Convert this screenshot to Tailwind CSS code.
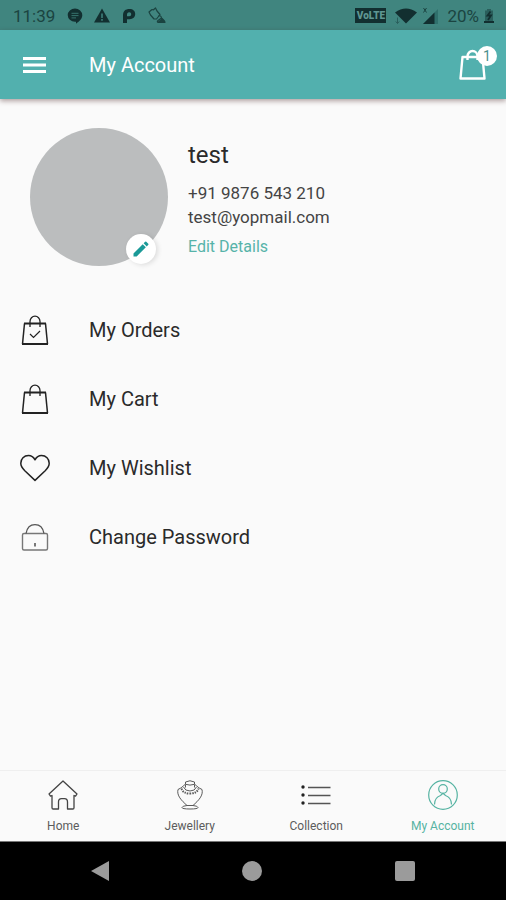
<!DOCTYPE html>
<html lang="en">
<head>
<meta charset="utf-8">
<meta name="viewport" content="width=device-width, initial-scale=1">
<title>My Account</title>
<script src="https://cdn.jsdelivr.net/npm/@tailwindcss/browser@4"></script>
</head>
<body class="flex min-h-screen flex-col bg-[#fafafa] font-['Roboto',sans-serif] text-[#2a2a2a]">

<!-- Status bar -->
<div class="flex h-[30px] items-center justify-between bg-[#40857f] pt-px pr-3 pl-[13px] text-[#1b4441]">
  <div class="flex items-center gap-3">
    <span class="text-[17px] leading-6">11:39</span>
    <div class="flex items-center gap-[11px]">
      <svg class="size-4" viewBox="0 0 16 16" fill="#122f30" aria-hidden="true"><path d="M8 0.500a7.300 6.800 0 0 1 7.300 6.700c0 3.600-3.200 6.200-6.300 8.500v-2H8A7.300 6.600 0 0 1 8 .5z"/><path d="M4.500 5.300h7M4.500 7.600h7M4.500 9.900h4.500" stroke="#40857f" stroke-width=".8"/></svg>
      <svg class="size-4" viewBox="0 0 16 16" fill="#122f30" aria-hidden="true"><path d="M8 .5l8 14H0z"/><path d="M8 5.500v4.500M8 11v1.800" stroke="#40857f" stroke-width="1.500"/></svg>
      <svg class="size-4" viewBox="0 0 16 16" fill="#122f30" fill-rule="evenodd" aria-hidden="true"><path d="M2 15V7.500C2 3 4.500 1 8.500 1c3.500 0 5.700 2 5.700 5s-2.200 5.200-5.500 5.200H6V15zM6 8.300h2.200c1.300 0 2-.8 2-2s-.7-2-2-2C6.700 4.300 6 5.200 6 6.800z"/></svg>
      <svg class="size-[18px]" viewBox="0 0 18 18" fill="none" stroke="#1b4441" stroke-width="1.200" stroke-linejoin="round" aria-hidden="true"><path d="M1 5l3-2.500 1.500.3L7.500 1l1.500 3 3 3.500-3.500 4.500H6L2.500 8z"/><path d="M10.500 9q2.500-1 3 2l-3.500 2.500q-1.500 1.500.5 2h5.500q1.500-.5 0-2l-2.500-2.500"/><path d="M10.500 15l3.500-3 3 3.300z" fill="#1b4441"/></svg>
    </div>
  </div>
  <div class="flex items-center gap-[9px]">
    <span class="flex h-[15px] w-[31px] items-center justify-center bg-[#122f30] text-[10px] leading-none font-black text-[#5f9692]">VoLTE</span>
    <div class="flex items-center gap-[5px]">
      <svg class="h-4 w-[22px]" viewBox="0 0 22 16" fill="#122f30" aria-hidden="true"><path d="M0 4.500Q11-3.500 22 4.500L11 15.500z"/><path d="M2.500 9.500v6M.8 13.500l1.700 2 1.700-2" stroke="#2a5f5c" fill="none"/></svg>
      <svg class="size-4" viewBox="0 0 16 16" aria-hidden="true"><path d="M16 1v15H1z" fill="#2f706c"/><path d="M12.500 4.500V16H1z" fill="#122f30"/><path d="M1.500 0l3 4.500M4.500 0l-3 4.500" stroke="#1b4441"/></svg>
    </div>
    <div class="flex items-center gap-[5px]">
      <span class="text-[17px] leading-6">20%</span>
      <svg class="h-4 w-[10px]" viewBox="0 0 10 16" aria-hidden="true"><path d="M3 1h4v1.500h2V15H1V2.500h2z" fill="#2a5f5c"/><path d="M0 13h10v2H0z" fill="#122f30"/><path d="M6.500 3.500L3.500 7.500h3.500L4 12" fill="none" stroke="#122f30" stroke-width="1.800"/></svg>
    </div>
  </div>
</div>

<!-- App bar -->
<header class="z-10 flex h-[69px] items-center bg-[#52b0ae] pr-[9px] pl-[23px] text-white shadow-[0_2px_5px_rgba(60,20,20,0.4)]">
  <button type="button" aria-label="Open menu" class="w-[66px]">
    <svg class="h-4 w-[23px]" viewBox="0 0 23 16" fill="currentColor" aria-hidden="true"><path d="M0 0h23v3H0zM0 6.500h23v3H0zM0 13h23v3H0z"/></svg>
  </button>
  <h1 class="flex-1 text-xl leading-6">My Account</h1>
  <button type="button" aria-label="Cart, 1 item" class="relative h-9 w-[38px]">
    <svg class="h-8 w-7" viewBox="0 0 28 32" fill="none" stroke="currentColor" stroke-width="2.400" stroke-linejoin="round" aria-hidden="true"><path d="M3.500 8h20l2 21.500H1.500z"/><path d="M8.500 11V7.500a5 5.500 0 0 1 10 0V11"/></svg>
    <span class="absolute -top-px right-0 flex size-5 items-center justify-center rounded-full bg-white text-sm leading-none text-[#4a8f8d]">1</span>
  </button>
</header>

<main class="flex-1">
  <!-- Profile -->
  <section class="flex gap-5 px-[30px] pt-[29px]">
    <div class="relative size-[138px] shrink-0 rounded-full bg-[#bbbdbe]">
      <button type="button" aria-label="Change photo" class="absolute right-3 bottom-[2px] flex size-[30px] items-center justify-center rounded-full bg-white shadow-[2px_1px_5px_rgba(0,0,0,0.12)]">
        <svg class="size-5" viewBox="0 0 24 24" fill="#1a9a98" aria-hidden="true"><path d="M3 17.250V21h3.750L17.810 9.940l-3.750-3.750L3 17.250zM20.710 7.040a1 1 0 0 0 0-1.410l-2.340-2.340a1 1 0 0 0-1.410 0l-1.830 1.830 3.750 3.750 1.830-1.830z"/></svg>
      </button>
    </div>
    <div class="flex flex-col items-start pt-3">
      <h2 class="text-2xl leading-[30px]">test</h2>
      <p class="mt-[11px] text-[17px] leading-6 text-[#444444]">+91 9876 543 210</p>
      <p class="text-[17px] leading-6 text-[#444444]">test@yopmail.com</p>
      <a href="#" class="mt-[6px] text-base leading-6 text-[#56b3a9]">Edit Details</a>
    </div>
  </section>

  <!-- Account links -->
  <nav aria-label="Account" class="mt-[29px] flex flex-col text-xl leading-6">
    <a href="#" class="flex h-[69px] items-center gap-[39px] px-5">
      <svg class="size-[30px]" viewBox="0 0 30 30" fill="none" stroke="#222222" aria-hidden="true"><path d="M4.500 8.500L2.500 29" stroke-width="1.500"/><path d="M25.500 8.500l2 20.500" stroke-width="1.500"/><path d="M4 8.500h22M2 29h26" stroke-width="1.800"/><path d="M10 12V6.500a5 5.300 0 0 1 10 0V12" stroke-width="1.300"/><path d="M10 19l3.500 3.500 6.500-6.500" stroke-width="1.200"/></svg>
      <span>My Orders</span>
    </a>
    <a href="#" class="flex h-[69px] items-center gap-[39px] px-5">
      <svg class="size-[30px]" viewBox="0 0 30 30" fill="none" stroke="#222222" aria-hidden="true"><path d="M4.500 8.500L2.500 29" stroke-width="1.500"/><path d="M25.500 8.500l2 20.500" stroke-width="1.500"/><path d="M4 8.500h22M2 29h26" stroke-width="1.800"/><path d="M10 12V6.500a5 5.300 0 0 1 10 0V12" stroke-width="1.300"/></svg>
      <span>My Cart</span>
    </a>
    <a href="#" class="flex h-[69px] items-center gap-[39px] px-5">
      <svg class="size-[30px]" viewBox="0 0 30 30" fill="none" stroke="#222222" stroke-width="1.500" stroke-linejoin="round" aria-hidden="true"><path d="M15 6.800C13.300 3.700 11 2.600 8.500 2.600 4 2.600.8 6 .8 10.300c0 3 1.700 5.200 4 7.500L15 27.400l10.200-9.600c2.300-2.300 4-4.500 4-7.500 0-4.300-3.200-7.700-7.700-7.700-2.500 0-4.800 1.100-6.500 4.200z"/></svg>
      <span>My Wishlist</span>
    </a>
    <a href="#" class="flex h-[69px] items-center gap-[39px] px-5">
      <svg class="size-[30px]" viewBox="0 0 30 30" fill="none" stroke="#777777" aria-hidden="true"><rect x="2.500" y="11.500" width="25" height="16.500" rx="1.500" stroke-width="1.400"/><path d="M6 11.500C7 6 10 2.700 15 2.700s8 3.300 9 8.800" stroke="#555555" stroke-width="1.300"/><path d="M15 21v3.500" stroke="#333333" stroke-width="1.300"/></svg>
      <span>Change Password</span>
    </a>
  </nav>
</main>

<!-- Tab bar -->
<nav aria-label="Main" class="grid h-[71px] grid-cols-4 border-t border-[#efefef] text-xs leading-4 text-[#5c5c5c]">
  <a href="#" class="flex flex-col items-center gap-2 pt-[9px]">
    <svg class="size-[30px]" viewBox="0 0 30 30" fill="none" stroke="#444444" stroke-width="1.300" stroke-linejoin="round" aria-hidden="true"><path d="M15 1L1 14l1.500 2.200L4 15.500v12.300q0 1.200 1.200 1.200h5.300v-7q0-3.300 3-3.300h3q3 0 3 3.300v7h5.300q1.200 0 1.200-1.200V15.500l1.500.7L29 14z"/></svg>
    <span>Home</span>
  </a>
  <a href="#" class="flex flex-col items-center gap-2 pt-[9px]">
    <svg class="size-[30px]" viewBox="0 0 30 30" fill="none" stroke="#5a5a5a" aria-hidden="true"><path d="M10.500 2q4.500-2.500 9 0v2.300q-4.500 1.600-9 0zM10.500 4.500v3M19.500 4.500v3"/><path d="M10 4.500C7 7 7 7.500 3 9.500c-1.500 6 3.500 11 9 16h6c5.500-5 10.500-10 9-16-4-2-4-2.500-7-5"/><path d="M6.500 8.500Q8 13.500 15 13.500t8.500-5" stroke-width="2" stroke-dasharray="1.500 1"/><path d="M8.500 7q1.500 4 6.500 4t6.500-4"/><path d="M12 25.500q-5 .5-5 2t8 1.500 8-1.500-5-2"/></svg>
    <span>Jewellery</span>
  </a>
  <a href="#" class="flex flex-col items-center gap-2 pt-[9px]">
    <svg class="size-[30px]" viewBox="0 0 30 30" fill="#222222" aria-hidden="true"><circle cx="2" cy="7" r="1.700"/><circle cx="2" cy="15" r="1.700"/><circle cx="2" cy="23" r="1.700"/><path d="M7 7.500h22.500M7 15.500h22.500M7 23.500h22.500" stroke="#555555" stroke-width="1.400"/></svg>
    <span>Collection</span>
  </a>
  <a href="#" aria-current="page" class="flex flex-col items-center gap-2 pt-[9px] text-[#56b3a2]">
    <svg class="size-[30px]" viewBox="0 0 30 30" fill="none" stroke="#56b3a2" stroke-width="1.200" aria-hidden="true"><circle cx="15" cy="15" r="14.300"/><circle cx="15" cy="9" r="4.300"/><path d="M6.500 24.500c0-5 3-8 6-9l2.500-2.200 2.500 2.200c3 1 6 4 6 9"/></svg>
    <span>My Account</span>
  </a>
</nav>

<!-- System navigation -->
<div class="flex h-[59px] items-center justify-center gap-[133px] border-t border-[#777777] bg-black">
  <button type="button" aria-label="Back"><svg class="h-5 w-[18px]" viewBox="0 0 18 20" fill="#9b9b9b" aria-hidden="true"><path d="M18 0v20L0 10z"/></svg></button>
  <button type="button" aria-label="Home screen" class="size-5 rounded-full bg-[#9b9b9b]"></button>
  <button type="button" aria-label="Recent apps" class="size-5 rounded-xs bg-[#9b9b9b]"></button>
</div>
</body>
</html>
